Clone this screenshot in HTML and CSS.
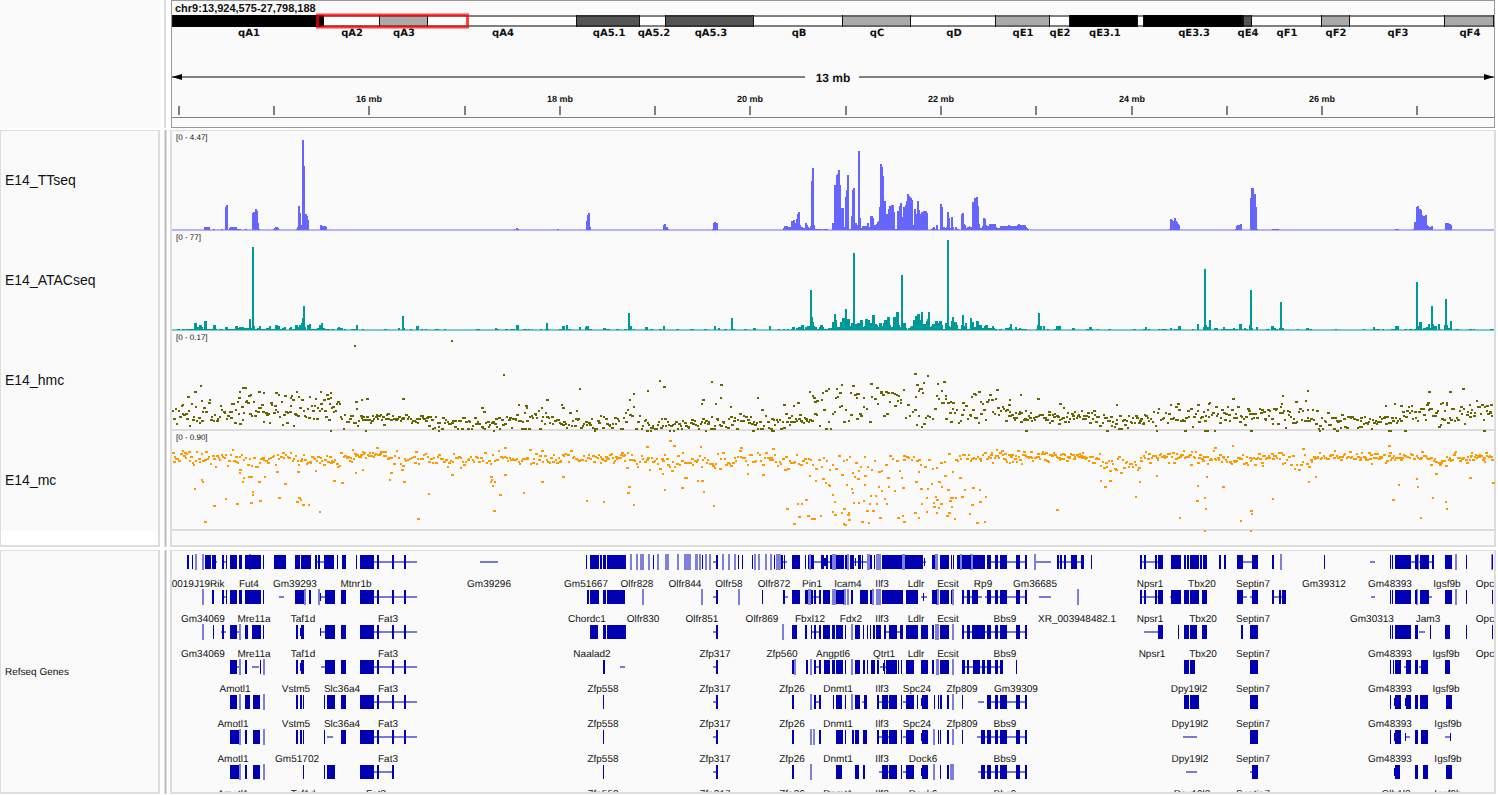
FILE: index.html
```html
<!DOCTYPE html>
<html lang="en">
<head>
<meta charset="utf-8">
<title>chr9:13,924,575-27,798,188</title>
<link rel="stylesheet" href="styles.css">
</head>
<body>
<main class="browser">
  <div class="names names-head"></div>
  <div class="divider divider-head"></div>
  <header class="head">
    <h1 class="locus">chr9:13,924,575-27,798,188</h1>
    <svg class="ideogram" id="ideogram"></svg>
    <svg class="ruler" id="ruler"></svg>
  </header>

  <div class="names panel">
    <div class="name name-track">E14_TTseq</div>
    <div class="name name-track">E14_ATACseq</div>
    <div class="name name-track">E14_hmc</div>
    <div class="name name-track">E14_mc</div>
  </div>
  <div class="divider"></div>
  <section class="data panel data-signal">
    <svg class="track" id="ttseq"></svg>
    <svg class="track" id="atac"></svg>
    <svg class="track" id="hmc"></svg>
    <svg class="track" id="mc"></svg>
  </section>

  <div class="names panel lower">
    <div class="name name-genes">Refseq Genes</div>
  </div>
  <div class="divider lower"></div>
  <section class="data panel lower">
    <svg class="genes" id="genes"></svg>
  </section>
</main>
<script src="tracks.js"></script>
</body>
</html>
```

FILE: styles.css
```css
* { box-sizing: border-box; }

body {
  margin: 0;
  background: #fff;
  font-family: "Liberation Sans", Arial, sans-serif;
  color: #111;
}

.browser {
  display: grid;
  grid-template-columns: 160px 4px minmax(0, 1fr);
  gap: 2px 3px;
  padding-right: 2px;
}
.lower { margin-top: 1px; }

.names-head { background: #fafafa; }

.divider {
  margin-left: 1px;
  border: solid #ddd;
  border-width: 0 1px;
  background: #bbb;
}
.divider-head {
  width: 2px;
  border: 0;
  background: #ddd;
}

.head {
  margin: 0 1px;
  border: 1px solid #999;
  background: #fafafa;
}
.locus {
  margin: 0;
  padding-left: 3px;
  font-size: 11px;
  font-weight: bold;
  line-height: 14px;
  height: 12px;
}

svg { display: block; width: 100%; }
.ideogram { height: 28px; }
.ruler { height: 61px; margin-top: 25px; }

.panel {
  border: solid #ddd;
  border-width: 1px 2px 2px 1px;
}
.data {
  border-left-width: 2px;
  background: #fafafa;
}
.data-signal { padding-bottom: 14px; }

.name {
  display: flex;
  align-items: center;
  padding-left: 4px;
  background: #fafafa;
}
.name-track { height: 100px; padding-bottom: 2px; font-size: 14px; }
.name-genes { height: 100%; padding-top: 2px; font-size: 10px; text-rendering: geometricPrecision; }

.track { height: 100px; overflow: visible; }
.genes { height: 241px; overflow: hidden; }
.shapes { overflow: visible; }

text { fill: #111; text-rendering: geometricPrecision; }
.t-range { font-size: 8px; }
.t-gene { font-size: 10px; text-anchor: middle; }
.t-band {
  font: bold 10px "DejaVu Sans", sans-serif;
  text-anchor: middle;
}
.t-tick { font-size: 9px; font-weight: bold; text-anchor: middle; }
.t-span { font-size: 12px; font-weight: bold; text-anchor: middle; }
```

FILE: tracks.js
```js
// All x values share one scale: 172 is the left edge of the view, 1494 the right edge.
const LEFT = 172, SPAN = 1322;

const rect = (x, y, w, h, fill, extra = '') =>
  `<rect x="${x}" y="${y}" width="${w}" height="${h}" fill="${fill}" ${extra}/>`;

const label = (cls, x, y, text) =>
  `<text class="${cls}" x="${((x - LEFT) / SPAN * 100).toFixed(2)}%" y="${y}">${text}</text>`;

// Shapes stretch with the view, labels keep their natural size.
function draw(id, top, height, shapes, labels) {
  document.getElementById(id).innerHTML =
    `<svg class="shapes" width="100%" height="${height}" viewBox="${LEFT} ${top} ${SPAN} ${height}" preserveAspectRatio="none">${shapes}</svg>${labels}`;
}

/* ---------- ideogram ---------- */
{
  const G = '#aaa', D = '#555', B = '#000';
  const bands = [[172, 324, B], [379, 428, G], [576, 640, D], [665, 754, D], [842, 911, G], [995, 1050, G],
    [1069, 1138, B], [1143, 1243, B], [1243, 1252, D], [1321, 1350, G], [1444, 1494, G]];
  const names = [[249, 'qA1'], [352, 'qA2'], [404, 'qA3'], [503, 'qA4'], [609, 'qA5.1'], [654, 'qA5.2'], [711, 'qA5.3'],
    [799, 'qB'], [877, 'qC'], [954, 'qD'], [1023, 'qE1'], [1060, 'qE2'], [1105, 'qE3.1'], [1194, 'qE3.3'], [1248, 'qE4'],
    [1287, 'qF1'], [1336, 'qF2'], [1398, 'qF3'], [1470, 'qF4']];
  let s = rect(172, 15, SPAN, 12, '#808080') + rect(172, 17, SPAN, 8, '#fff');
  for (const [a, b, c] of bands) {
    s += rect(a, 15, b - a, 12, c) + rect(a, 15, b - a, 2, '#000', 'opacity=".4"') + rect(a, 25, b - a, 2, '#000', 'opacity=".4"');
    s += rect(a, 15, 1, 12, '#111') + rect(b - 1, 15, 1, 12, '#111');
  }
  s += '<rect x="317.5" y="15" width="150" height="12" fill="none" stroke="#f00" stroke-opacity=".75" stroke-width="3"/>';
  draw('ideogram', 13, 28, s, names.map(([x, t]) => label('t-band', x, 23, t)).join(''));
}

/* ---------- ruler ---------- */
{
  const ticks = [179, 274, 369, 465, 560, 655, 750, 846, 941, 1036, 1132, 1227, 1322, 1417];
  let s = rect(172, 76, 633, 2, '#808080') + rect(859, 76, 635, 2, '#808080');
  s += '<path d="M172 77L182 74V80ZM1494 77L1484 74V80Z"/>';
  s += ticks.map(x => rect(x - 1, 106, 2, 9, '#808080')).join('');
  s += rect(172, 117, SPAN, 1, '#808080');
  let t = label('t-span', 833, 16, '13 mb');
  [16, 18, 20, 22, 24, 26].forEach((mb, i) => { t += label('t-tick', ticks[2 + i * 2], 36, mb + ' mb'); });
  draw('ruler', 66, 61, s, t);
}

/* ---------- coverage tracks: x, width, height ---------- */
const ttseq = [204,6,3,213,2,1,221,2,1,225,1,23,226,2,25,229,1,2,230,7,3,237,4,1,245,2,1,252,1,17,253,2,18,255,2,21,257,1,19,258,1,7,259,1,1,
273,1,1,274,1,2,275,3,3,278,1,2,296,1,1,297,1,3,298,2,24,300,1,17,301,1,5,302,2,90,304,1,64,305,2,16,307,1,14,308,1,10,320,2,5,322,4,4,326,1,3,
514,1,1,516,2,2,518,1,1,557,2,1,586,1,9,587,1,15,588,2,17,590,1,3,663,1,5,664,2,6,666,2,3,668,1,1,712,1,1,713,1,7,714,2,8,716,2,7,
783,1,2,784,4,4,788,3,3,791,2,9,793,2,10,795,1,7,796,1,11,797,1,16,798,2,18,800,1,5,801,2,3,803,2,2,805,2,7,807,1,5,808,1,3,809,1,2,810,1,4,
811,1,49,812,2,62,814,1,5,815,7,1,823,5,1,832,2,7,834,2,45,836,1,55,837,1,56,838,2,60,840,1,45,841,3,22,844,1,3,845,1,33,846,1,40,847,2,55,849,2,1,
851,1,14,852,1,40,853,2,42,855,2,7,857,1,5,858,2,79,860,1,12,861,1,2,862,5,4,867,2,7,869,1,3,870,3,14,873,1,12,874,2,5,876,1,6,877,1,8,878,1,9,
879,1,23,880,2,66,882,1,63,883,1,54,884,2,29,886,2,16,888,1,21,889,2,24,891,3,25,894,1,18,895,2,1,897,2,19,899,1,24,900,2,27,902,1,13,903,2,23,
905,1,25,906,1,29,907,2,36,909,1,34,910,1,33,911,1,32,912,1,30,913,1,5,914,2,21,916,1,16,917,2,29,919,1,20,920,1,16,921,2,18,923,4,19,927,1,17,
931,1,1,932,1,2,933,2,3,935,1,1,936,2,5,940,2,26,942,1,23,943,2,3,945,1,2,946,1,3,947,2,18,949,1,12,950,1,2,951,2,13,953,1,3,955,2,3,957,2,1,
961,1,16,962,2,17,964,1,6,965,1,5,966,1,2,967,2,3,969,1,4,970,2,3,972,2,28,974,2,32,976,2,33,978,1,24,979,1,6,980,2,2,982,1,4,983,2,12,985,1,11,
986,1,5,987,2,4,989,7,6,996,1,3,997,3,2,1000,8,4,1008,2,5,1010,7,4,1017,1,5,1018,2,6,1020,6,5,1026,1,3,1027,1,2,1028,1,1,
1169,1,1,1170,2,11,1172,1,10,1173,1,9,1174,2,12,1176,1,9,1177,1,8,1178,1,6,1179,1,5,1235,1,1,1236,1,4,1237,3,5,1240,2,6,1250,1,32,1251,3,42,
1254,2,36,1256,1,23,1257,1,1,1272,7,1,1395,4,1,1413,1,1,1414,2,8,1416,1,23,1417,2,24,1419,2,21,1421,1,20,1422,1,15,1423,2,14,1425,2,15,1427,1,5,
1428,1,4,1429,2,3,1431,2,4,1445,4,7,1449,2,6,1451,1,5];

const atac = [177,3,1,182,3,1,186,8,1,194,3,7,197,2,3,199,3,5,202,1,3,203,1,1,204,3,9,207,6,1,213,3,5,216,1,1,219,4,1,225,3,3,228,7,1,235,3,4,238,1,2,
239,5,3,244,5,2,249,2,11,251,1,2,252,2,83,254,1,4,255,2,1,257,2,2,259,2,4,261,5,1,266,3,2,269,2,4,271,4,1,275,3,5,278,2,4,280,2,1,282,2,2,284,2,3,
289,1,2,290,2,3,292,3,1,295,3,5,298,1,3,299,2,5,301,1,7,302,1,12,303,2,24,305,1,3,307,2,5,309,2,6,311,6,1,317,2,2,319,2,5,321,2,7,323,2,2,325,5,1,
331,3,1,337,1,2,338,2,3,340,3,2,344,2,1,351,5,1,356,2,5,362,2,1,384,3,1,398,2,2,402,2,14,404,1,2,410,2,1,416,3,4,421,2,1,425,2,1,435,4,1,444,2,1,
476,4,1,495,2,2,497,2,1,505,3,1,510,5,1,516,3,5,523,4,1,528,2,1,532,1,1,540,2,1,545,1,1,546,2,7,548,1,1,559,3,1,562,3,4,566,2,5,568,3,1,579,2,3,
585,1,3,586,3,4,589,3,1,603,3,2,606,4,1,616,3,1,624,3,1,628,2,17,630,2,4,633,2,1,645,3,3,650,3,1,659,3,1,663,2,4,676,3,1,690,4,1,704,3,1,714,2,4,
718,2,2,724,3,1,731,2,12,733,2,1,744,3,1,753,3,2,769,2,4,778,2,1,783,2,1,787,2,1,791,1,1,792,3,3,796,2,2,798,3,3,801,3,5,804,1,1,805,2,3,807,3,4,
810,2,40,812,1,13,813,1,8,814,1,4,815,2,3,817,2,1,819,1,3,820,3,5,823,1,3,824,4,1,828,4,2,832,2,8,834,2,16,836,1,10,837,3,3,840,2,8,842,3,12,
845,2,21,847,3,11,850,1,4,851,2,7,853,2,77,855,2,6,857,3,7,860,3,10,863,1,3,864,1,4,865,3,11,868,2,10,870,2,7,872,3,15,875,2,6,877,1,5,878,1,3,
879,3,7,882,1,4,883,1,7,884,3,10,887,3,13,890,1,5,891,2,3,893,3,13,896,3,18,899,1,5,900,1,3,901,2,55,903,3,7,906,1,2,908,2,2,910,1,3,911,2,4,
913,2,10,915,2,14,917,3,16,920,1,10,921,2,18,923,3,6,926,1,9,927,1,11,928,2,18,930,1,3,931,1,4,932,3,6,935,3,9,938,1,7,939,3,9,942,1,5,943,2,1,
945,2,7,947,2,90,949,1,4,950,1,3,951,1,9,952,2,13,954,3,8,957,1,5,958,3,1,961,1,5,962,2,15,964,1,4,965,2,7,967,3,1,970,2,12,972,2,8,974,2,3,
976,3,9,979,3,5,982,2,2,984,1,4,985,3,5,988,4,2,992,2,4,994,1,2,995,2,1,999,3,1,1005,4,2,1009,1,3,1010,2,6,1012,1,1,1015,2,3,1017,2,1,1019,2,2,
1021,6,1,1036,1,1,1037,1,5,1038,2,17,1040,2,4,1043,2,4,1047,2,1,1054,2,1,1056,5,4,1072,3,2,1086,4,1,1089,3,3,1092,1,1,1097,2,1,1108,3,1,
1133,3,1,1143,2,1,1145,2,3,1148,2,1,1158,2,1,1161,6,1,1170,2,2,1174,4,1,1178,3,4,1192,2,1,1197,2,6,1203,1,3,1204,2,61,1206,1,5,1207,2,3,1209,2,10,
1214,4,2,1221,2,1,1223,2,3,1225,8,1,1233,2,2,1235,3,1,1239,3,6,1242,1,1,1244,2,2,1246,2,1,1249,1,5,1250,2,40,1252,1,2,1256,2,3,1266,3,1,1271,3,4,
1274,2,2,1276,2,1,1279,1,2,1280,2,28,1282,2,2,1297,2,1,1306,3,2,1309,3,1,1335,2,1,1363,2,1,1373,2,3,1375,5,1,1382,2,1,1391,4,1,1395,4,4,1404,3,1,
1409,4,1,1414,2,1,1416,2,48,1418,1,4,1419,3,8,1422,1,1,1423,3,2,1426,2,3,1428,2,6,1430,1,2,1431,2,24,1433,1,6,1434,3,4,1438,2,6,1440,1,1,1444,1,5,
1445,2,31,1447,1,5,1448,2,2,1450,2,9,1455,4,1,1469,3,1,1473,2,1,1490,4,1];

function coverage(id, data, color, light, range) {
  let d = '';
  for (let i = 0; i < data.length; i += 3) d += `M${data[i]} 99v${-data[i + 2]}h${data[i + 1]}V99Z`;
  draw(id, 0, 100, rect(LEFT, 98, SPAN, 2, light) + `<path d="${d}" fill="${color}"/>`,
    `<text class="t-range" x="4" y="9">${range}</text>`);
}
coverage('ttseq', ttseq, '#66f', '#b2b2ff', '[0 - 4.47]');
coverage('atac', atac, '#099', '#7ccbcb', '[0 - 77]');

/* ---------- point tracks ---------- */
// band: from x, mean y, spread, points per unit; runs until the next entry
const hmcBand = [[172,412,9,.7],[210,415,8,.7],[230,409,12,.75],[300,411,11,.75],[340,416,8,.7],[357,418,4,.8],[428,423,5,.7],[495,421,7,.7],[515,418,8,.7],
[560,421,7,.65],[625,416,10,.5],[641,423,6,.7],[705,422,7,.65],[785,419,5,.8],[812,408,14,.45],[860,404,12,.35],[905,410,11,.45],[945,414,10,.55],[980,409,9,.65],
[1005,414,6,.8],[1048,416,6,.8],[1095,422,6,.75],[1145,416,8,.6],[1200,414,8,.75],[1290,419,8,.65],[1330,422,6,.7],[1360,420,5,.75],[1400,415,9,.65],[1440,413,9,.7],[1490,414,6,.7]];
const hmcPoints = `354,345 451,340 503,374 200,385 194,391 187,396 201,400 182,404 239,391 242,387 244,387 248,395 238,397 258,391 263,392 275,392 284,395 296,391 290,397 292,399
302,399 320,391 326,394 330,392 330,397 314,405 355,401 361,399 366,398 402,398 481,407 483,411 518,404 524,412 526,407 541,407 546,399 561,404 562,407 579,388 576,410
659,380 663,386 647,390 633,393 629,399 702,399 701,403 711,381 720,384 720,397 715,403 730,406 757,397 761,409 783,404 793,405 797,402 809,391 813,397 814,401 816,400
822,392 825,390 828,388 841,384 839,392 837,396 835,397 850,392 856,393 858,393 856,397 863,397 870,383 876,387 880,391 882,394 885,391 887,392 892,392 894,393 896,394
898,395 900,399 914,373 927,375 923,382 916,384 919,388 921,388 918,390 922,392 915,396 937,383 943,381 941,390 971,396 973,393 975,394 978,391 996,389 1008,404 1009,399
1020,394 1037,398 962,402 945,398 950,401 952,402 1059,403 1116,404 1170,404 1177,403 1175,406 1197,404 1208,403 1232,398 1282,395 1281,403 1307,390 1305,400 1295,401
1307,409 1385,405 1394,403 1428,391 1449,391 1462,388 1427,402 1442,402 1469,404 1411,405 1446,404 1486,405
330,430 365,430 438,430 493,430 594,430 646,430 650,430 669,430 673,430 705,430 752,430 771,430 773,430 1025,430 1106,430 1156,430 1184,430 1204,430 1206,430 1214,430
1250,430 1319,430 1336,430 1388,430 1390,430 1404,430 1483,430`;

const mcBand = [[172,456,4,.9],[190,458,6,.65],[235,460,5,.5],[260,457,5,.6],[300,460,4,.7],[340,455,4,.7],[354,454,3,.8],[389,457,5,.55],[415,459,5,.6],[480,458,6,.5],
[504,459,5,.65],[560,458,5,.6],[600,456,4,.85],[624,460,7,.6],[712,459,7,.6],[790,461,5,.5],[812,464,10,.35],[860,462,11,.28],[903,457,4,.4],[920,466,11,.25],[955,458,4,.55],
[990,457,5,.85],[1050,455,3,.9],[1085,457,4,.7],[1100,463,6,.65],[1140,456,4,.75],[1190,457,5,.75],[1222,459,5,.75],[1262,455,3,.7],[1282,459,6,.5],[1310,456,4,.7],[1360,457,4,.8],
[1400,456,4,.7],[1430,461,4,.8],[1450,457,4,.75],[1470,456,4,.85],[1491,457,2,.5]];
const mcPoints = `194,488 201,479 202,481 213,505 204,521 225,498 236,503 239,469 239,472 243,477 242,481 248,476 251,476 252,491 252,494 250,502 259,500 258,481 264,476 276,471
278,497 284,483 297,471 298,497 296,501 300,499 302,504 308,504 319,511 315,470 333,480 341,482 362,469 355,472 389,479 390,472 401,469 403,481 417,518 428,493 451,474 460,467
490,476 491,479 490,481 492,485 494,481 493,510 499,494 504,474 523,492 541,481 562,476 586,500 603,501 628,486 627,492 633,504 664,489 681,487 684,477 686,477 697,480 701,480
703,491 713,505 662,473 747,473 762,474 786,508 793,523 798,516 797,503 801,503 805,499 807,515 811,518 813,518 820,515 809,475 815,480 822,478 825,482 828,484 829,485 832,494
834,501 832,511 834,514 841,512 843,508 847,514 848,512 843,523 844,524 848,519 846,484 851,488 852,492 854,476 857,478 853,502 858,502 863,500 861,521 868,522 866,510 872,510
869,503 870,495 875,495 876,503 879,517 884,498 886,503 881,490 878,486 887,477 888,486 894,490 897,517 903,521 902,515 902,487 901,477 864,484 864,475 914,512 918,517 918,471
915,481 920,488 921,503 926,511 927,488 926,497 931,483 933,502 933,506 935,496 936,499 936,512 938,507 940,503 938,481 941,486 944,475 947,489 946,515 948,512 949,500 950,497
952,497 955,497 951,506 954,518 959,477 961,496 964,489 972,487 971,504 969,513 976,522 979,489 979,501 985,496 984,521 669,440 673,445 646,446 700,446 740,447 772,448 376,447
352,449 504,447 1056,509 1100,480 1104,486 1109,480 1135,496 1139,481 1156,475 1179,517 1197,485 1196,500 1204,497 1205,508 1206,476 1222,486 1240,520 1250,510 1251,513 1272,498
1308,481 1315,476 1392,499 1398,484 1416,478 1417,486 1420,517 1432,497 1435,473 1445,501 1446,508 1469,477 1492,482 1214,447 1232,445 1388,445 1302,448 1204,530 1250,530`;

function points(id, top, band, list, color, range, seed) {
  const rnd = () => (seed = (seed * 16807) % 2147483647) / 2147483647;
  let d = '';
  const dot = (x, y) => { d += `M${x} ${y}h${rnd() < .4 ? 3 : 2}v2H${x}Z`; };
  band.forEach(([from, mean, spread, density], i) => {
    const to = band[i + 1] ? band[i + 1][0] : 1492;
    for (let x = from; x < to; x += 1 / density)
      dot(Math.round(x), Math.min(top + 97, Math.round(mean + (rnd() + rnd() + rnd() - 1.5) * spread * 1.3)));
  });
  for (const p of list.trim().split(/\s+/)) dot(...p.split(',').map(Number));
  draw(id, top, 100, rect(LEFT, top + 98, SPAN, 2, '#ddd') + `<path d="${d}" fill="${color}"/>`,
    `<text class="t-range" x="4" y="9">${range}</text>`);
}
points('hmc', 331, hmcBand, hmcPoints, '#660', '[0 - 0.17]', 4711);
points('mc', 431, mcBand, mcPoints, '#f90', '[0 - 0.90]', 977);

/* ---------- genes ---------- */
// s: exons, l: faint exons, n: introns, h: half-height exons; each a list of x, width
const fat3 = [360,14,377,2,392,2,404,2];
const bbs9 = [987,4,995,3,1000,7,1016,4,1025,2];
const rows = [
  { s: [187,2,192,1,205,6,212,4,222,2,226,1,230,7,239,3,245,16,263,1,274,12,295,5,301,10,315,2,318,2,324,10,337,1,342,4,356,1,...fat3,
      586,1,590,9,600,2,603,3,607,19,653,1,702,1,716,2,738,1,742,1,752,1,774,1,781,2,784,1,792,3,795,5,805,1,808,1,811,3,821,3,826,2,830,2,836,8,845,2,850,4,
      858,3,862,1,870,2,874,1,882,20,905,18,932,3,940,9,951,1,953,1,957,3,962,9,973,12,...bbs9,
      1057,2,1060,2,1064,2,1071,6,1081,3,1091,1,1140,2,1144,2,1155,2,1158,5,1171,10,1184,2,1187,2,1190,9,1200,2,1203,4,1219,2,1224,2,1237,6,1252,6,1272,2,
      1324,1,1390,1,1392,1,1395,16,1415,3,1420,9,1432,2,1445,7,1466,1,1492,1],
    l: [195,2,202,2,249,2,630,2,636,2,640,4,648,2,657,2,665,4,677,2,684,7,695,3,699,2,705,2,709,2,722,2,728,2,734,2,754,2,758,2,765,2,770,2,776,5,809,2,832,4,
      847,2,867,3,876,5,902,3,935,3,960,2,970,3,1034,2,1280,2,1417,2,1455,2,1491,2],
    n: [212,5,222,4,317,8,374,43,480,18,713,4,781,6,810,25,854,14,922,4,987,39,1036,15,1057,26,1140,20,1237,18,1370,5,1411,21], h: [824,3,855,1,924,1] },
  { s: [212,2,222,2,226,1,230,7,239,3,245,16,263,1,295,9,309,2,325,10,341,5,...fat3,587,2,590,9,603,3,607,18,716,2,762,1,783,2,792,3,795,5,805,3,811,2,814,2,
      819,2,823,7,836,8,851,2,860,8,870,2,882,21,906,12,932,5,940,9,951,1,962,2,967,3,972,6,...bbs9,1140,2,1144,2,1155,2,1158,5,1171,10,1184,5,1190,9,1202,5,
      1237,6,1252,6,1272,2,1279,2,1282,4,1390,1,1392,1,1395,16,1415,2,1420,9,1445,7,1466,1,1492,1],
    l: [202,2,304,2,318,2,642,2,701,2,738,2,808,3,832,4,843,3,847,2,872,2,876,5,936,3,952,2,1077,2,1416,2,1455,2],
    n: [222,5,279,5,319,6,374,43,713,4,783,5,811,10,921,6,962,20,985,41,1039,12,1140,20,1170,2,1243,4,1250,2,1272,14,1371,4,1420,12], h: [320,1,923,1] },
  { s: [213,1,222,2,230,7,245,3,252,9,263,1,296,2,301,3,325,10,341,5,...fat3,590,8,603,3,607,19,716,2,792,3,795,2,805,2,811,1,814,2,819,2,823,7,832,3,836,7,
      845,1,855,5,863,1,867,1,870,1,873,2,876,5,884,2,889,8,900,3,906,12,921,7,932,2,940,9,962,2,967,3,972,13,...bbs9,1158,5,1178,1,1184,5,1190,7,1202,5,1241,2,
      1250,8,1390,1,1392,1,1395,16,1415,3,1430,1,1445,5,1466,1,1492,1],
    l: [202,2,239,2,782,2,851,2,935,4,952,2],
    n: [221,5,237,3,320,5,374,43,713,4,811,10,886,16,962,65,1144,14,1419,6], h: [320,1,300,1] },
  { s: [230,7,245,2,260,1,296,2,301,3,325,10,341,5,...fat3,603,2,716,2,792,2,806,2,814,2,819,2,824,6,832,3,836,7,845,1,855,5,863,2,867,1,871,4,877,2,884,1,
      886,11,898,1,901,1,906,8,921,7,932,2,940,9,962,3,967,2,973,7,982,3,987,4,995,3,1000,3,1016,1,1184,5,1190,5,1250,8,1390,1,1393,1,1395,6,1406,5,1415,3,
      1421,7,1445,5],
    l: [239,2,263,2,794,2,810,2,851,2,936,3,952,2],
    n: [237,3,252,7,321,4,374,43,620,5,713,4,814,6,880,6,962,40,1404,3,1419,3], h: [300,1,883,1] },
  { s: [230,7,245,5,253,7,296,2,300,2,303,1,324,1,327,8,341,5,...fat3,603,1,716,2,792,2,814,2,819,2,833,1,836,6,845,1,855,5,864,3,877,2,882,6,889,8,901,1,
      906,8,917,1,922,6,934,1,938,1,940,2,947,2,962,1,...bbs9,1184,5,1190,9,1250,8,1390,1,1395,6,1406,5,1415,3,1420,8,1446,6],
    l: [239,2,263,2,810,2,851,2,952,2], n: [374,43,713,4,814,6,862,4,877,12,903,3,978,6,987,39], h: [1394,1,921,1,1405,1] },
  { s: [230,9,245,2,253,7,296,2,300,2,303,1,324,1,341,5,...fat3,603,1,716,2,792,2,819,2,836,7,845,1,852,2,855,4,863,4,877,2,882,6,889,8,901,1,906,8,922,6,
      938,1,940,1,947,2,962,1,981,4,...bbs9,1250,8,1390,1,1395,6,1415,3,1421,7],
    l: [239,2,263,2,810,2,813,2,933,2,952,2], n: [327,6,374,43,713,4,877,12,903,3,977,49,1183,14,1405,5,1445,5], h: [1405,1,1450,1,1394,1,921,1] },
  { s: [230,9,245,2,253,7,303,1,324,1,327,8,360,14,377,2,392,2,603,1,716,2,792,2,836,6,855,4,863,2,882,6,889,8,901,1,906,8,922,6,940,1,947,2,981,4,...bbs9,
      1252,6,1395,5,1415,3,1423,5,1446,6],
    l: [239,2,263,2,810,2,933,2,950,4], n: [374,19,713,4,879,12,903,3,978,49,1186,11,1250,2], h: [1394,1,921,1] }
];
const geneLabels = [
  '198 0019J19Rik,249 Fut4,295 Gm39293,356 Mtnr1b,489 Gm39296,586 Gm51667,637 Olfr828,685 Olfr844,729 Olfr58,774 Olfr872,812 Pin1,848 Icam4,882 Ilf3,916 Ldlr,948 Ecsit,983 Rp9,1035 Gm36685,1150 Npsr1,1202 Tbx20,1253 Septin7,1324 Gm39312,1390 Gm48393,1447 Igsf9b,1485 Opc',
  '203 Gm34069,254 Mre11a,303 Taf1d,388 Fat3,587 Chordc1,643 Olfr830,702 Olfr851,762 Olfr869,810 Fbxl12,851 Fdx2,882 Ilf3,916 Ldlr,948 Ecsit,1005 Bbs9,1077 XR_003948482.1,1150 Npsr1,1203 Tbx20,1253 Septin7,1372 Gm30313,1428 Jam3,1485 Opc',
  '203 Gm34069,254 Mre11a,303 Taf1d,388 Fat3,592 Naalad2,715 Zfp317,782 Zfp560,833 Angptl6,884 Qtrt1,916 Ldlr,948 Ecsit,1005 Bbs9,1152 Npsr1,1203 Tbx20,1253 Septin7,1390 Gm48393,1446 Igsf9b,1485 Opc',
  '235 Amotl1,296 Vstm5,342 Slc36a4,388 Fat3,603 Zfp558,715 Zfp317,792 Zfp26,838 Dnmt1,882 Ilf3,917 Spc24,962 Zfp809,1016 Gm39309,1189 Dpy19l2,1253 Septin7,1390 Gm48393,1446 Igsf9b',
  '233 Amotl1,296 Vstm5,342 Slc36a4,388 Fat3,603 Zfp558,715 Zfp317,792 Zfp26,838 Dnmt1,882 Ilf3,917 Spc24,962 Zfp809,1005 Bbs9,1190 Dpy19l2,1253 Septin7,1390 Gm48393,1448 Igsf9b',
  '233 Amotl1,297 Gm51702,388 Fat3,603 Zfp558,715 Zfp317,792 Zfp26,838 Dnmt1,882 Ilf3,923 Dock6,1005 Bbs9,1190 Dpy19l2,1253 Septin7,1390 Gm48393,1448 Igsf9b',
  '233 Amotl1,303 Taf1d,376 Fat3,603 Zfp558,715 Zfp317,792 Zfp26,838 Dnmt1,882 Ilf3,923 Dock6,1005 Bbs9,1192 Dpy19l2,1253 Septin7,1396 Glb1l2,1448 Igsf9b'
];
{
  const path = (list, y, h, fill) => {
    let d = '';
    for (let i = 0; i < (list || []).length; i += 2) d += `M${list[i]} ${y}h${list[i + 1]}v${h}H${list[i]}Z`;
    return `<path d="${d}" fill="${fill}"/>`;
  };
  const shapes = rows.map((r, i) => {
    const y = 35 * i;
    return path(r.n, 561 + y, 2, '#7a7ad6') + path(r.l, 554 + y, 16, '#8080d8') + path(r.s, 555 + y, 14, '#0000b2') + path(r.h, 558 + y, 8, '#0000b2');
  }).join('');
  const labels = geneLabels.map((line, i) => line.split(',').map(g => {
    const [x, name] = g.split(' ');
    return label('t-gene', +x, 36 + 35 * i, name);
  }).join('')).join('');
  draw('genes', 551, 241, shapes, labels);
}
```
